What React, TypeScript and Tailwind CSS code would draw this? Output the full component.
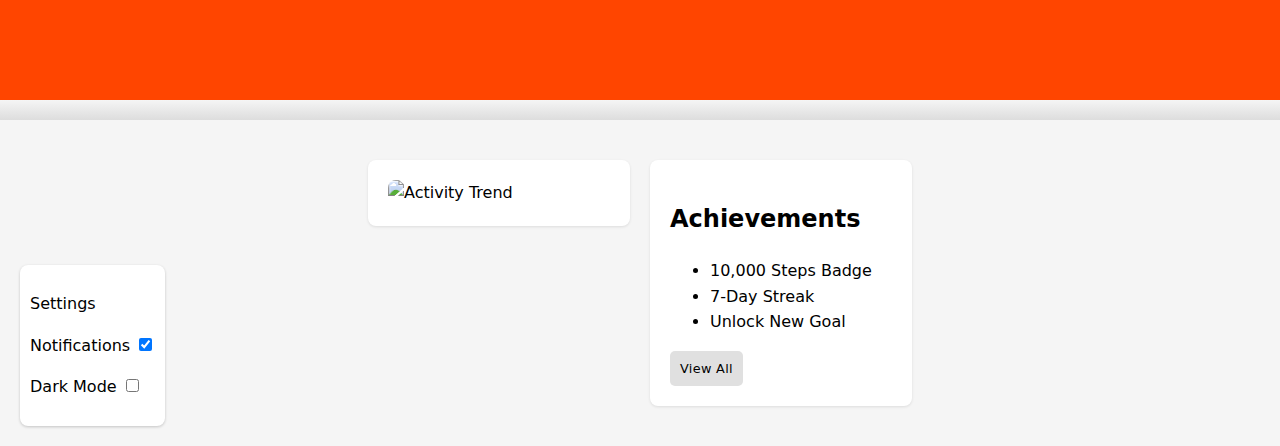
export default function App() {
  return (
    <div className="relative h-[446px] overflow-hidden bg-[#f5f5f5] font-['DejaVu_Sans',sans-serif] text-base leading-[25.6px] text-black">
      <header className="h-[100px] bg-[#ff4500]" />
      <div className="h-5 bg-linear-to-b from-[#f5f5f5] to-[#dddddd]" />
      <main className="flex items-start justify-center gap-5 pt-10">
        <section className="h-[66px] w-[262px] rounded-lg bg-white p-5 shadow-[0_1px_3px_rgba(0,0,0,0.1)]">
          <img src="trend.png" alt="Activity Trend" className="inline max-w-full rounded-lg align-baseline" />
        </section>
        <section className="w-[262px] rounded-lg bg-white p-5 shadow-[0_1px_3px_rgba(0,0,0,0.1)]">
          <h2 className="mt-5 mb-[19.5px] text-2xl leading-[38.4px] font-bold">Achievements</h2>
          <ul className="mb-[16.5px] list-disc pl-10">
            <li>10,000 Steps Badge</li>
            <li>7-Day Streak</li>
            <li>Unlock New Goal</li>
          </ul>
          <button className="block h-[35px] w-[73px] rounded-[5px] bg-[#e0e0e0] px-2.5 text-left text-[12.8px] leading-[15px] tracking-[0.33px] whitespace-nowrap">View All</button>
        </section>
      </main>
      <aside className="absolute bottom-5 left-5 h-[161px] w-[145px] rounded-lg bg-white px-2.5 py-[26px] shadow-[0_1px_3px_rgba(0,0,0,0.2)]">
        <p className="mb-4">Settings</p>
        <label className="mb-4 block whitespace-nowrap">
          Notifications <input type="checkbox" defaultChecked className="mt-[3px] mr-[3px] mb-[3px] ml-1" />
        </label>
        <label className="block whitespace-nowrap">
          Dark Mode <input type="checkbox" className="mt-[3px] mr-[3px] mb-[3px] ml-1" />
        </label>
      </aside>
    </div>
  );
}
